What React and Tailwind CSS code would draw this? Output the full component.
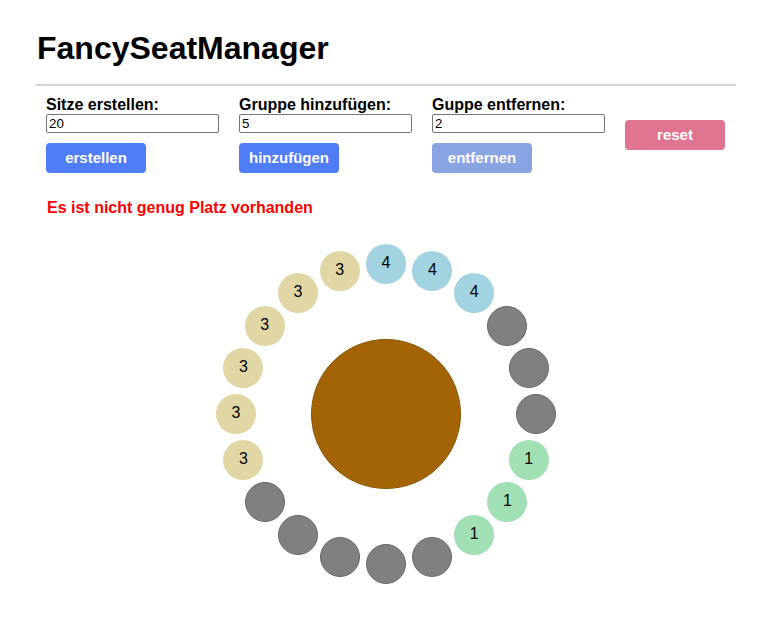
import React from "react";

const seats = [
  null, null, null, null, "3", "3", "3", "3", "3", "3",
  "4", "4", "4", null, null, null, "1", "1", "1", null,
];

const colorFor = (g) => {
  if (g === "3") return "bg-[#e0d7a4]";
  if (g === "4") return "bg-[#a1d4e0]";
  if (g === "1") return "bg-[#a1e0b5]";
  return "bg-[#808080] border border-[#6a6a6a]";
};

function Field({ label, value, button, btnClass }) {
  return (
    <div className="flex flex-col w-[173px]">
      <label className="text-[16px] leading-[18px] font-bold text-black whitespace-nowrap">{label}</label>
      <input
        readOnly
        value={value}
        className="w-[173px] h-[19px] border border-[#767676] rounded-[2px] px-[2px] text-[13.33px] leading-[15px] text-black bg-white outline-none"
      />
      <button className={`mt-[10px] w-[100px] h-[30px] rounded-[4px] text-white font-bold text-[15px] ${btnClass}`}>
        {button}
      </button>
    </div>
  );
}

export default function App() {
  const cx = 350;
  const cy = 197;
  const r = 150;
  return (
    <div className="min-h-screen bg-white" style={{ fontFamily: '"Liberation Sans", Arial, sans-serif' }}>
      <div className="ml-[36px] w-[700px]">
        <h1 className="mt-[30px] text-[32px] leading-[37px] font-bold text-black pl-[1px]">FancySeatManager</h1>
        <div className="mt-[17px] h-[2px] bg-[#d0d7da]" />
        <div className="mt-[10px] px-[10px] flex gap-[20px]">
          <Field label="Sitze erstellen:" value="20" button="erstellen" btnClass="bg-[#4f7cf7]" />
          <Field label="Gruppe hinzufügen:" value="5" button="hinzufügen" btnClass="bg-[#4f7cf7]" />
          <Field label="Guppe entfernen:" value="2" button="entfernen" btnClass="bg-[#8aa3e3]" />
          <div className="pt-[24px]">
            <button className="w-[100px] h-[30px] rounded-[4px] text-white font-bold text-[15px] bg-[#e07592]">reset</button>
          </div>
        </div>
        <div className="mt-[26px] px-[11px] text-[16px] leading-[18px] font-bold text-[#ff0000]">
          Es ist nicht genug Platz vorhanden
        </div>
        <div className="relative h-[380px]">
          <div
            className="absolute w-[150px] h-[150px] rounded-full bg-[#a36405] border border-[#8c5505]"
            style={{ left: cx - 75, top: cy - 75 }}
          />
          {seats.map((g, i) => {
            const a = (i * 18 * Math.PI) / 180;
            const x = cx - r * Math.sin(a);
            const y = cy + r * Math.cos(a);
            return (
              <div
                key={i}
                className={`absolute w-[40px] h-[40px] rounded-full flex items-center justify-center text-[16px] text-black pb-[2px] ${colorFor(g)}`}
                style={{ left: x - 20, top: y - 20 }}
              >
                {g}
              </div>
            );
          })}
        </div>
      </div>
    </div>
  );
}
